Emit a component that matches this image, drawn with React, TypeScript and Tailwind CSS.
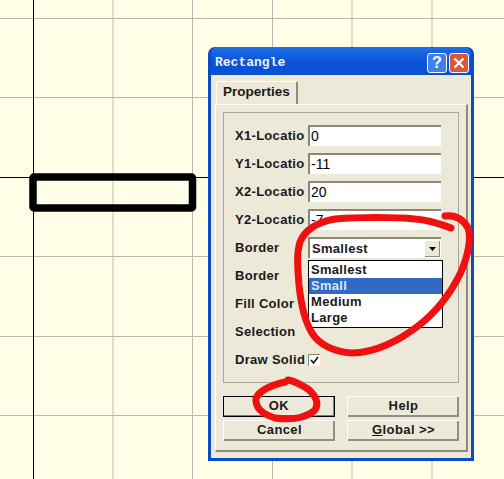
import React from 'react';

const gridX = [113, 192.5, 272.5, 352, 432];
const gridY = [18.5, 97.5, 256.5, 336.5, 415.5];

const Canvas = () => (
  <svg className="absolute inset-0" width="504" height="479" viewBox="0 0 504 479">
    {gridX.map(x => <line key={x} x1={x} y1="0" x2={x} y2="479" stroke="#bdb9ad" strokeWidth="1" />)}
    {gridY.map(y => <line key={y} x1="0" y1={y} x2="504" y2={y} stroke="#bdb9ad" strokeWidth="1" />)}
    <line x1="33.5" y1="0" x2="33.5" y2="479" stroke="#000" strokeWidth="1" />
    <line x1="0" y1="177.5" x2="504" y2="177.5" stroke="#000" strokeWidth="1" />
    <rect x="33" y="177" width="159.5" height="31" rx="1" fill="none" stroke="#000" strokeWidth="7.5" />
  </svg>
);

const Field: React.FC<{ label: string; value: string }> = ({ label, value }) => (
  <div className="flex h-[21px] items-center">
    <span className="mr-[3px] w-[70px] overflow-hidden whitespace-nowrap tracking-[0.3px]">{label}</span>
    <div className="flex h-[21px] w-[133px] items-center border-t-2 border-l-2 border-t-[#8b8778] border-l-[#8b8778] bg-white pl-[1px] text-[14px] font-normal text-black">
      {value}
    </div>
  </div>
);

const Label: React.FC<{ children: React.ReactNode }> = ({ children }) => (
  <div className="flex h-[21px] items-center">
    <span className="w-[73px] whitespace-nowrap tracking-[0.3px]">{children}</span>
  </div>
);

const Btn: React.FC<{ children: React.ReactNode; isDefault?: boolean }> = ({ children, isDefault }) => (
  <button
    className={`flex h-[21px] w-[112px] items-center justify-center bg-[#ece9d8] pb-[2px] text-[13px] font-bold tracking-[0.4px] ${
      isDefault
        ? 'border border-black shadow-[inset_-1px_-1px_0_#7f7c70]'
        : 'border-t border-l border-t-white border-l-white shadow-[inset_-2px_-2px_0_#918e82]'
    }`}
  >
    {children}
  </button>
);

const Dialog = () => (
  <div className="absolute left-[208px] top-[47px] flex h-[414px] w-[266px] flex-col rounded-t-[7px] bg-[#0a4bc8] px-[3px] pb-[3px] font-['Liberation_Sans',sans-serif] text-[13px] font-bold text-[#1a1a1a]">
    <div className="flex h-[28px] shrink-0 items-center justify-between rounded-t-[7px] bg-gradient-to-b from-[#1f6fe8] via-[#0a55d8] to-[#0b4fd0] pl-[4px] pr-[2px] pt-[4px]">
      <span className="font-['Liberation_Mono',monospace] text-[13px] font-bold text-[#f2f2f2]">Rectangle</span>
      <div className="flex gap-[2px]">
        <div className="flex h-[20px] w-[20px] items-center justify-center rounded-[3px] border border-white bg-[#3f7fe6] text-[16px] font-bold text-white">?</div>
        <div className="flex h-[20px] w-[20px] items-center justify-center rounded-[3px] border border-white bg-[#d9583a]">
          <svg width="12" height="12" viewBox="0 0 12 12"><path d="M1.5 1.5l9 9M10.5 1.5l-9 9" stroke="#fff" strokeWidth="2.2" /></svg>
        </div>
      </div>
    </div>

    <div className="flex flex-1 flex-col bg-[#ece9d8] px-[4px] pt-[6px]">
      <div className="ml-[1px] flex h-[23px] w-[82px] items-center rounded-t-[2px] border-t border-l border-r-2 border-t-white border-l-white border-r-[#8d8a7e] pb-[2px] pl-[6px] text-[13.5px]">
        Properties
      </div>
      <div className="flex h-[348px] w-[253px] flex-col border-t border-l border-r-2 border-b-2 border-t-white border-l-white border-r-[#8d8a7e] border-b-[#8d8a7e] px-[7px] pt-[7px]">
        <div className="relative h-[271px] w-[236px] border border-[#aaa797] pl-[11px] pt-[12px]">
          <div className="flex flex-col gap-[7px]">
            <Field label="X1-Location" value="0" />
            <Field label="Y1-Location" value="-11" />
            <Field label="X2-Location" value="20" />
            <Field label="Y2-Location" value="-7" />
            <div className="flex h-[21px] items-center">
              <span className="w-[73px] tracking-[0.3px]">Border</span>
              <div className="flex h-[21px] w-[133px] items-center justify-between border-t-2 border-l-2 border-t-[#8b8778] border-l-[#8b8778] bg-white pl-[2px] pr-[1px] font-bold tracking-[0.3px]">
                Smallest
                <div className="flex h-[17px] w-[16px] items-center justify-center border-t border-l border-t-white border-l-white bg-[#ece9d8] shadow-[inset_-1px_-1px_0_#8d8a7e]">
                  <svg width="7" height="4" viewBox="0 0 7 4"><path d="M0 0h7L3.5 4z" fill="#000" /></svg>
                </div>
              </div>
            </div>
            <Label>Border</Label>
            <Label>Fill Color</Label>
            <Label>Selection</Label>
            <div className="flex h-[21px] items-center">
              <span className="w-[73px] whitespace-nowrap tracking-[0.3px]">Draw Solid</span>
              <div className="flex h-[12px] w-[12px] items-center justify-center border-t border-l border-t-[#8b8778] border-l-[#8b8778] bg-white">
                <svg width="9" height="9" viewBox="0 0 9 9"><path d="M1 4l2.5 3L8 1" fill="none" stroke="#111" strokeWidth="1.6" /></svg>
              </div>
            </div>
          </div>

          {/* open dropdown */}
          <div className="absolute left-[84px] top-[147px] flex w-[135px] flex-col border border-black bg-white py-[1px] font-bold tracking-[0.3px]">
            <div className="h-[16px] pl-[2px] leading-[16px]">Smallest</div>
            <div className="h-[16px] bg-[#316ac5] pl-[2px] leading-[16px] text-[#d9e6f5]">Small</div>
            <div className="h-[16px] pl-[2px] leading-[16px]">Medium</div>
            <div className="h-[16px] pl-[2px] leading-[16px]">Large</div>
          </div>
        </div>
        <div className="mt-[13px] grid grid-cols-[112px_112px] gap-x-[12px] gap-y-[3px]">
          <Btn isDefault>OK</Btn>
          <Btn>Help</Btn>
          <Btn>Cancel</Btn>
          <Btn><span><span className="underline">G</span>lobal &gt;&gt;</span></Btn>
        </div>
      </div>
    </div>
  </div>
);

const RedMarks = () => (
  <svg className="absolute inset-0" width="504" height="479" viewBox="0 0 504 479" fill="none" stroke="#f01010" strokeLinecap="round" strokeLinejoin="round">
    <path strokeWidth="7" d="M451 228C440 224 430 220 415 219C395 217 360 217 335 219C318 222 305 230 300 242C296 255 298 270 299 285C301 305 304 320 312 333C319 345 335 352 352 353C375 353 400 340 418 326C435 313 450 295 461 272C468 255 472 240 468 228C463 219 455 215 445 216" />
    <path strokeWidth="7" d="M285 382C272 385 260 390 256 398C255 407 262 414 275 418C290 420 305 418 314 411C320 404 316 396 308 389C300 384 294 381 288 380" />
  </svg>
);

export default function App() {
  return (
    <div className="relative h-[479px] w-[504px] overflow-hidden bg-[#ffffe8]">
      <Canvas />
      <Dialog />
      <RedMarks />
    </div>
  );
}
